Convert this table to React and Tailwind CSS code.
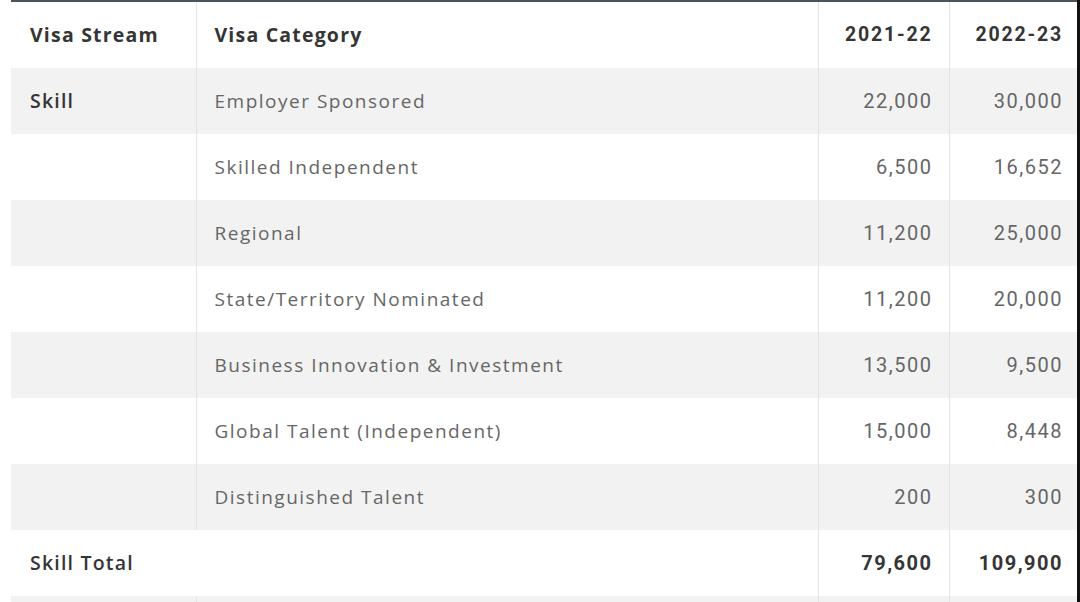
import React from "react";

const rows = [
  ["Skill", "Employer Sponsored", "22,000", "30,000"],
  ["", "Skilled Independent", "6,500", "16,652"],
  ["", "Regional", "11,200", "25,000"],
  ["", "State/Territory Nominated", "11,200", "20,000"],
  ["", "Business Innovation & Investment", "13,500", "9,500"],
  ["", "Global Talent (Independent)", "15,000", "8,448"],
  ["", "Distinguished Talent", "200", "300"],
];

export default function App() {
  return (
    <div className="relative h-[602px] w-[1080px] overflow-hidden bg-white font-['Open_Sans',sans-serif]">
      <div className="ml-[11px] w-[1066px] border-t-2 border-[#4b5260]">
        <table className="w-full table-fixed border-collapse">
          <colgroup>
            <col className="w-[185px]" />
            <col className="w-[622px]" />
            <col className="w-[131px]" />
            <col className="w-[128px]" />
          </colgroup>
          <thead>
            <tr className="h-[66px] bg-white text-[19.5px] font-semibold text-[#353535]">
              <th className="px-[19px] text-left tracking-[1.2px]">Visa Stream</th>
              <th className="border-l border-[#e4e4e4] px-[18px] text-left tracking-[1.2px]">Visa Category</th>
              <th className="border-l border-[#e4e4e4] pr-[16px] text-right font-['Roboto',sans-serif] font-bold tracking-[1.8px]">2021-22</th>
              <th className="border-l border-[#e4e4e4] pr-[14px] text-right font-['Roboto',sans-serif] font-bold tracking-[1.8px]">2022-23</th>
            </tr>
          </thead>
          <tbody>
            {rows.map((r, i) => (
              <tr key={i} className={"h-[66px] " + (i % 2 === 0 ? "bg-[#f2f2f2]" : "bg-white")}>
                <td className="px-[19px] text-[19.5px] font-semibold tracking-[1.2px] text-[#353535]">{r[0]}</td>
                <td className="border-l border-[#e4e4e4] px-[18px] text-[19px] tracking-[1.5px] text-[#666]">{r[1]}</td>
                <td className="border-l border-[#e4e4e4] pr-[16px] text-right font-['Roboto',sans-serif] text-[20px] tracking-[1.5px] text-[#666]">{r[2]}</td>
                <td className="border-l border-[#e4e4e4] pr-[14px] text-right font-['Roboto',sans-serif] text-[20px] tracking-[1.5px] text-[#666]">{r[3]}</td>
              </tr>
            ))}
            <tr className="h-[66px] bg-white text-[#353535]">
              <td colSpan={2} className="px-[19px] text-[19.5px] font-semibold tracking-[1.2px]">Skill Total</td>
              <td className="border-l border-[#e4e4e4] pr-[16px] text-right font-['Roboto',sans-serif] text-[20px] font-bold tracking-[1.5px]">79,600</td>
              <td className="border-l border-[#e4e4e4] pr-[14px] text-right font-['Roboto',sans-serif] text-[20px] font-bold tracking-[1.5px]">109,900</td>
            </tr>
            <tr className="h-[66px] bg-[#f2f2f2]">
              <td></td>
              <td className="border-l border-[#e4e4e4]"></td>
              <td className="border-l border-[#e4e4e4]"></td>
              <td className="border-l border-[#e4e4e4]"></td>
            </tr>
          </tbody>
        </table>
      </div>
      <div className="absolute right-0 top-0 h-full w-[3px] bg-[#111]" />
    </div>
  );
}
